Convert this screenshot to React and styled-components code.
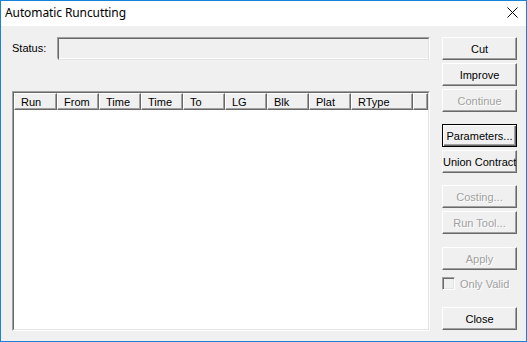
import React from 'react';
import styled, { createGlobalStyle } from 'styled-components';

const GlobalStyle = createGlobalStyle`
  html, body {
    margin: 0;
    padding: 0;
    background: #f0f0f0;
  }
  * {
    box-sizing: border-box;
  }
`

const Window = styled.div`
  width: 527px;
  height: 342px;
  border: 1px solid #1883d7;
  background: #f0f0f0;
  display: flex;
  flex-direction: column;
  font-family: "Liberation Sans", Arial, sans-serif;
  font-size: 11px;
  font-weight: 400;
  color: #000;
  overflow: hidden;
`

const TitleBar = styled.div`
  height: 25px;
  background: #ffffff;
  display: flex;
  align-items: center;
  justify-content: space-between;
  padding: 0 8px 2px 4px;
  flex-shrink: 0;
`

const Title = styled.span`
  font-family: "Noto Sans", "Open Sans", sans-serif;
  font-size: 12px;
  letter-spacing: -0.1px;
`

const CloseGlyph = styled.svg`
  width: 11px;
  height: 11px;
`

const Body = styled.div`
  flex: 1;
  display: flex;
  gap: 12px;
  padding: 11px 9px 0 11px;
`

const LeftColumn = styled.div`
  width: 418px;
  display: flex;
  flex-direction: column;
`

const StatusRow = styled.div`
  display: flex;
  align-items: center;
  height: 22px;
`

const StatusLabel = styled.span`
  width: 45px;
`

const Sunken = styled.div`
  border-style: solid;
  border-width: 1px;
  border-color: #a0a0a0 #ffffff #ffffff #a0a0a0;
`

const StatusField = styled(Sunken)`
  flex: 1;
  height: 22px;
  &::before {
    content: '';
    display: block;
    height: 100%;
    border-style: solid;
    border-width: 1px;
    border-color: #696969 #e3e3e3 #e3e3e3 #696969;
  }
`

const ListView = styled(Sunken)`
  margin-top: 32px;
  height: 240px;
  display: flex;
`

const ListInner = styled.div`
  flex: 1;
  border-style: solid;
  border-width: 1px;
  border-color: #696969 #e3e3e3 #e3e3e3 #696969;
  background: #ffffff;
  display: flex;
  flex-direction: column;
`

const Header = styled.div`
  display: flex;
  height: 17px;
  background: #f0f0f0;
`

const HeaderCell = styled.div`
  width: ${props => props.$width}px;
  flex: ${props => props.$fill ? 1 : 'none'};
  height: 17px;
  border-style: solid;
  border-width: 1px;
  border-color: #ffffff #696969 #696969 #ffffff;
  box-shadow: inset -1px -1px 0 #a0a0a0;
  padding: 0 0 0 6px;
  display: flex;
  align-items: center;
  white-space: nowrap;
  overflow: hidden;
`

const RightColumn = styled.div`
  width: 75px;
  display: flex;
  flex-direction: column;
`

const Button = styled.button`
  width: 75px;
  height: 23px;
  margin-top: ${props => props.$mt || 0}px;
  padding: 0;
  background: #f0f0f0;
  font-family: "Liberation Sans", Arial, sans-serif;
  font-size: 11px;
  font-weight: 400;
  color: #000;
  white-space: nowrap;
  overflow: hidden;
  border-style: solid;
  border-width: 1px;
  border-color: ${props => props.$default ? '#000000' : '#ffffff #696969 #696969 #ffffff'};
  box-shadow: ${props => props.$default
    ? 'inset 1px 1px 0 #ffffff, inset -1px -1px 0 #696969, inset -2px -2px 0 #a0a0a0'
    : 'inset -1px -1px 0 #a0a0a0'};

  &:disabled {
    color: #a0a0a0;
    text-shadow: 1px 1px 0 #ffffff;
  }
`

const CheckRow = styled.label`
  display: flex;
  align-items: center;
  gap: 5px;
  height: 13px;
  margin-top: 7px;
  white-space: nowrap;
`

const CheckBox = styled.span`
  width: 13px;
  height: 13px;
  flex-shrink: 0;
  border-style: solid;
  border-width: 1px;
  border-color: #a0a0a0 #ffffff #ffffff #a0a0a0;
  box-shadow: inset 1px 1px 0 #696969, inset -1px -1px 0 #e3e3e3;
  background: #f0f0f0;
`

const CheckLabel = styled.span`
  color: ${props => props.$disabled ? '#a0a0a0' : '#000'};
  text-shadow: ${props => props.$disabled ? '1px 1px 0 #ffffff' : 'none'};
`

const columns = [
  { name: 'Run', width: 43 },
  { name: 'From', width: 42 },
  { name: 'Time', width: 42 },
  { name: 'Time', width: 42 },
  { name: 'To', width: 42 },
  { name: 'LG', width: 42 },
  { name: 'Blk', width: 42 },
  { name: 'Plat', width: 42 },
  { name: 'RType', width: 62 },
]

export default function App() {
  return (
    <>
      <GlobalStyle />
      <Window>
        <TitleBar>
          <Title>Automatic Runcutting</Title>
          <CloseGlyph viewBox="0 0 11 11">
            <path d="M0.5 0.5 L10.5 10.5 M10.5 0.5 L0.5 10.5" stroke="#000" strokeWidth="1" fill="none" />
          </CloseGlyph>
        </TitleBar>
        <Body>
          <LeftColumn>
            <StatusRow>
              <StatusLabel>Status:</StatusLabel>
              <StatusField />
            </StatusRow>
            <ListView>
              <ListInner>
                <Header>
                  {columns.map((c, i) => (
                    <HeaderCell key={i} $width={c.width}>{c.name}</HeaderCell>
                  ))}
                  <HeaderCell $fill />
                </Header>
              </ListInner>
            </ListView>
          </LeftColumn>
          <RightColumn>
            <Button>Cut</Button>
            <Button $mt={3}>Improve</Button>
            <Button $mt={3} disabled>Continue</Button>
            <Button $mt={12} $default>Parameters...</Button>
            <Button $mt={3}>Union Contract</Button>
            <Button $mt={12} disabled>Costing...</Button>
            <Button $mt={3} disabled>Run Tool...</Button>
            <Button $mt={13} disabled>Apply</Button>
            <CheckRow>
              <CheckBox />
              <CheckLabel $disabled>Only Valid</CheckLabel>
            </CheckRow>
            <Button $mt={17}>Close</Button>
          </RightColumn>
        </Body>
      </Window>
    </>
  );
}
